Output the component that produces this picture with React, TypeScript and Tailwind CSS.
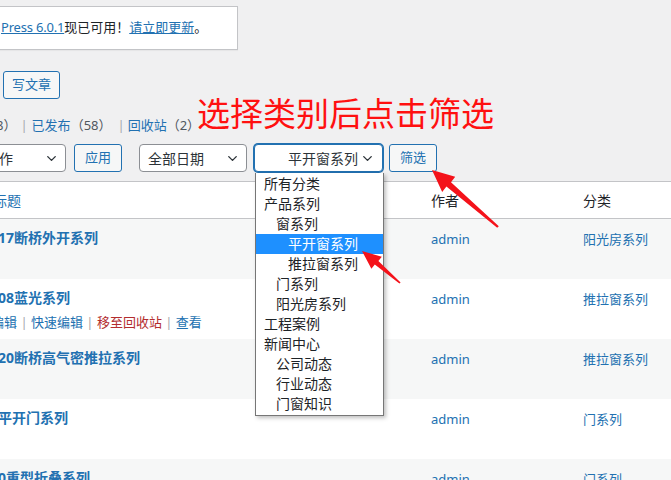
import { ChevronDown } from "lucide-react"

const font = { fontFamily: '"Noto Sans", "Noto Sans CJK SC", sans-serif' }

const categories = [
  { name: "所有分类", level: 0 },
  { name: "产品系列", level: 0 },
  { name: "窗系列", level: 1 },
  { name: "平开窗系列", level: 2, active: true },
  { name: "推拉窗系列", level: 2 },
  { name: "门系列", level: 1 },
  { name: "阳光房系列", level: 1 },
  { name: "工程案例", level: 0 },
  { name: "新闻中心", level: 0 },
  { name: "公司动态", level: 1 },
  { name: "行业动态", level: 1 },
  { name: "门窗知识", level: 1 },
]

const posts = [
  { title: "17断桥外开系列", cat: "阳光房系列" },
  { title: "08蓝光系列", cat: "推拉窗系列", actions: true },
  { title: "20断桥高气密推拉系列", cat: "推拉窗系列" },
  { title: "平开门系列", cat: "门系列" },
  { title: "0重型折叠系列", cat: "门系列" },
]

function Select({ label, className, focused }: { label: string; className: string; focused?: boolean }) {
  return (
    <div
      className={
        "h-[28px] flex items-center justify-between rounded-[4px] bg-white text-[14px] text-[#2c3338] " +
        (focused ? "border border-[#2271b1] shadow-[0_0_0_1px_#2271b1]" : "border border-[#8c8f94]") +
        " " +
        className
      }
    >
      <span className="whitespace-pre">{label}</span>
      <ChevronDown className="w-[15px] h-[15px] text-[#2c3338]" strokeWidth={2.2} />
    </div>
  )
}

function Button({ label, className }: { label: string; className: string }) {
  return (
    <div
      className={
        "h-[28px] flex items-center justify-center rounded-[3px] border border-[#2271b1] bg-[#f6f7f7] text-[#2271b1] text-[13px] " +
        className
      }
    >
      {label}
    </div>
  )
}

export default function App() {
  return (
    <div className="relative w-[671px] h-[480px] overflow-hidden bg-[#f0f0f1] text-[#1d2327]" style={font}>
      <div className="pt-[6px]">
        <div className="w-[238px] h-[44px] bg-white border border-l-0 border-[#c3c4c7] shadow-[0_1px_1px_rgba(0,0,0,0.04)] flex items-center text-[13px]">
          <span className="ml-[1px] text-[#2271b1] underline tracking-[-0.2px]">Press 6.0.1</span>
          <span>现已可用！</span>
          <span className="text-[#2271b1] underline">请立即更新</span>
          <span>。</span>
        </div>
      </div>

      <Button label="写文章" className="mt-[21px] ml-[3px] w-[57px]" />

      <div className="mt-[18px] h-[18px] flex items-center text-[13px] text-[#50575e] whitespace-pre">
        <span className="-ml-[4px]">8）</span>
        <span className="text-[#a7aaad] ml-[4px]">|</span>
        <span className="ml-[4px] text-[#2271b1]">已发布</span>
        <span>（58）</span>
        <span className="text-[#a7aaad] ml-[6px]">|</span>
        <span className="ml-[3px] text-[#2271b1]">回收站</span>
        <span>（2）</span>
      </div>

      <div className="mt-[9px] flex items-center">
        <Select label="作" className="-ml-[4px] w-[70px] pl-[2px] pr-[6px]" />
        <Button label="应用" className="ml-[8px] w-[48px]" />
        <Select label="全部日期" className="ml-[17px] w-[108px] pl-[8px] pr-[6px]" />
        <Select label="平开窗系列" focused className="ml-[7px] w-[129px] pl-[33px] pr-[7px]" />
        <Button label="筛选" className="ml-[6px] w-[48px]" />
      </div>

      <div className="mt-[9px] border-t border-[#c3c4c7] bg-white">
        <div className="h-[37px] flex items-center border-b border-[#c3c4c7] text-[14px]">
          <span className="w-[431px] -ml-[7px] pl-0 text-[#2271b1]">标题</span>
          <span className="w-[152px] ml-[7px]">作者</span>
          <span>分类</span>
        </div>
        {posts.map((p, i) => (
          <div key={i} className={"h-[60px] flex items-start pt-[9px] " + (i % 2 === 0 ? "bg-[#f6f7f7]" : "bg-white")}>
            <div className="w-[431px]">
              <div className="-ml-[2px] h-[20px] leading-[20px] text-[14px] font-bold text-[#2271b1]">{p.title}</div>
              {p.actions && (
                <div className="mt-[5px] -ml-[9px] h-[20px] flex items-center text-[13px] text-[#2271b1] whitespace-pre">
                  <span>编辑</span>
                  <span className="text-[#a7aaad]"> | </span>
                  <span>快速编辑</span>
                  <span className="text-[#a7aaad]"> | </span>
                  <span className="text-[#b32d2e]">移至回收站</span>
                  <span className="text-[#a7aaad]"> | </span>
                  <span>查看</span>
                </div>
              )}
            </div>
            <div className="w-[152px] h-[22px] leading-[22px] text-[13px] text-[#2271b1]">admin</div>
            <div className="h-[22px] leading-[22px] text-[13px] text-[#2271b1]">{p.cat}</div>
          </div>
        ))}
      </div>

      {/* annotation */}
      <div
        className="absolute left-[197px] top-[92px] text-[33px] leading-[40px] text-[#ff1010] whitespace-nowrap"
        style={{ fontFamily: '"Noto Sans CJK SC", sans-serif' }}
      >
        选择类别后点击筛选
      </div>

      {/* open dropdown */}
      <div className="absolute left-[255px] top-[173px] w-[129px] bg-white border border-t-0 border-[#767676] shadow-[2px_2px_4px_rgba(0,0,0,0.25)] text-[14px] py-[1px]">
        {categories.map((c) => (
          <div
            key={c.name}
            className={
              "h-[20px] leading-[20px] " +
              (c.level === 0 ? "pl-[8px] " : c.level === 1 ? "pl-[20px] " : "pl-[32px] ") +
              (c.active ? "bg-[#1e90ff] text-white" : "text-[#1d2327]")
            }
          >
            {c.name}
          </div>
        ))}
      </div>

      <svg className="absolute left-0 top-0 pointer-events-none" width="671" height="480">
        <polygon
          fill="#f4121a"
          points="432,170 455.2,176.8 451,182.2 498.8,226.2 497.2,227.8 446.4,186.4 442.2,192"
        />
        <polygon
          fill="#f4121a"
          points="362,251 381.8,256.8 378.4,261.1 400.6,282.4 399.4,283.6 374.8,264.5 371.4,268.8"
        />
      </svg>
    </div>
  )
}
